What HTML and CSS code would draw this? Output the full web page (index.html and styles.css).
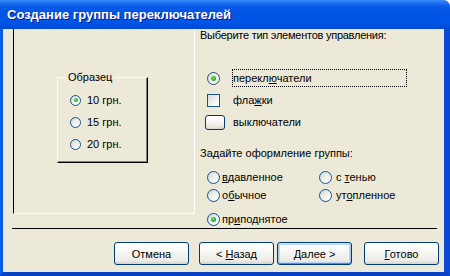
FILE: index.html
```html
<!DOCTYPE html>
<html lang="ru">
<head>
    <meta charset="UTF-8">
    <title>Создание группы переключателей</title>
    <link rel="stylesheet" href="styles.css">
</head>
<body>
<div class="window">
    <div class="titlebar"><span class="title">Создание группы переключателей</span></div>
    <div class="frame">
        <div class="client">
            <div class="main">
                <div class="preview">
                    <fieldset class="sample">
                        <legend>Образец</legend>
                        <div class="sample-row first"><span class="radio small on"></span><span>10 грн.</span></div>
                        <div class="sample-row"><span class="radio small"></span><span>15 грн.</span></div>
                        <div class="sample-row"><span class="radio small"></span><span>20 грн.</span></div>
                    </fieldset>
                </div>
                <div class="options">
                    <div class="heading first">Выберите тип элементов управления:</div>
                    <div class="types">
                        <div class="type-row"><span class="radio ind on"></span><span class="lbl focus">перекл<u>ю</u>чатели</span></div>
                        <div class="type-row"><span class="check ind"></span><span class="lbl">фла<u>ж</u>ки</span></div>
                        <div class="type-row"><span class="toggle"></span><span class="lbl">выключатели</span></div>
                    </div>
                    <div class="heading second">Задайте оформление группы:</div>
                    <div class="styles">
                        <div class="opt"><span class="radio"></span><span><u>в</u>давленное</span></div>
                        <div class="opt col2"><span class="radio"></span><span>с <u>т</u>енью</span></div>
                        <div class="opt"><span class="radio"></span><span>о<u>б</u>ычное</span></div>
                        <div class="opt col2"><span class="radio"></span><span>ут<u>о</u>пленное</span></div>
                        <div class="opt last"><span class="radio on"></span><span>пр<u>и</u>поднятое</span></div>
                    </div>
                </div>
            </div>
            <div class="separator"></div>
            <div class="buttons">
                <button class="btn cancel">Отмена</button>
                <button class="btn back">&lt; <u>Н</u>азад</button>
                <button class="btn next default"><u>Д</u>алее &gt;</button>
                <button class="btn"><u>Г</u>отово</button>
            </div>
        </div>
    </div>
</div>
</body>
</html>
```

FILE: styles.css
```css
* { box-sizing: border-box; }
html, body { margin: 0; background: #fff; }
body { font-family: "Liberation Sans", Arial, sans-serif; font-size: 11px; color: #000; }

.window { width: 450px; height: 276px; display: flex; flex-direction: column; border-top-right-radius: 7px; overflow: hidden; background: #0055e5; }
.titlebar { height: 29px; flex: none; padding: 7px 0 0 7px; background: linear-gradient(180deg, #3a8cf8 0, #1f70f0 3px, #0a5ce9 6px, #0054e3 14px, #0056e8 22px, #0049d4 29px); }
.title { color: #fff; font-weight: bold; font-size: 13px; line-height: 15px; text-shadow: 1px 1px 0 #0a1c8c; }

.frame { flex: 1; display: flex; border-left: 3px solid #0b5be9; border-right: 6px solid #0848d4; border-bottom: 4px solid #0741c6; }
.client { flex: 1; background: #ece9d8; display: flex; flex-direction: column; }

.main { height: 199px; display: flex; flex: none; }
.preview { width: 182px; height: 185px; margin-left: 10px; border-left: 1px solid #000; border-right: 1px solid #fff; border-bottom: 1px solid #fff; padding: 41px 0 0 43px; }

.sample { margin: 0; width: 91px; padding: 0 0 7px 8px; border: 1px solid; border-color: #fff #000 #000 #fff; box-shadow: inset -1px -1px 0 #808080; }
.sample legend { padding: 0 2px; line-height: 14px; }
.sample-row { display: flex; align-items: center; height: 22px; margin-left: 4px; }
.sample-row.first { margin-top: 5px; }

.radio { flex: none; width: 13px; height: 13px; border-radius: 50%; border: 1px solid #1c5180; background: linear-gradient(135deg, #d8d8d0 0%, #f2f2ee 55%, #fff 100%); display: flex; align-items: center; justify-content: center; margin-right: 2px; }
.radio.on::after { content: ""; width: 5px; height: 5px; border-radius: 50%; background: radial-gradient(circle at 40% 40%, #62e45e, #21a121 75%); }
.radio.small { width: 11px; height: 11px; margin-right: 6px; }
.radio.small.on::after { width: 4px; height: 4px; }

.options { margin-left: 5px; flex: 1; display: flex; flex-direction: column; }
.heading { line-height: 13px; }
.heading.first { letter-spacing: -0.25px; }
.heading.second { margin-top: 14px; }
.types { margin-top: 25px; }
.type-row { display: flex; align-items: center; height: 22px; }
.type-row .ind { margin-left: 7px; margin-right: 12px; }
.check { flex: none; width: 13px; height: 13px; border: 1px solid #1c5180; background: linear-gradient(135deg, #d8d8d0 0%, #f2f2ee 55%, #fff 100%); }
.toggle { flex: none; width: 20px; height: 15px; margin-left: 5px; margin-right: 7px; border: 1px solid #003c74; border-radius: 3px; background: linear-gradient(180deg, #fff 0%, #f5f4ef 50%, #e6e3d8 90%, #d6d0c5 100%); }
.lbl { border: 1px solid transparent; line-height: 16px; height: 18px; }
.lbl.focus { border: 1px dotted #000; width: 175px; }

.styles { display: grid; grid-template-columns: 112px auto; grid-template-rows: 18px 18px 24px; margin-top: 8px; padding-left: 7px; }
.opt { display: flex; align-items: center; height: 18px; }
.opt.col2 .radio { margin-right: 4px; }
.opt.last { margin-top: 6px; }

.separator { height: 1px; flex: none; background: #000; margin: 0 7px 0 9px; }

.buttons { display: flex; justify-content: flex-end; margin-top: 13px; padding-right: 5px; }
.btn { width: 75px; height: 23px; padding: 0; font: inherit; color: #000; border: 1px solid #003c74; border-radius: 3px; background: linear-gradient(180deg, #fff 0%, #f7f7f4 40%, #ecebe5 85%, #d6d0c5 100%); }
.btn.cancel { margin-right: 10px; }
.btn.back { margin-right: 3px; }
.btn.next { margin-right: 12px; }
.btn.default { box-shadow: inset 0 1px 0 #cee7ff, inset 0 -1px 0 #6982ee, inset 1px 0 0 #a6c4f0, inset -1px 0 0 #a6c4f0, inset 0 0 0 2px #bcd4f6; }
```
